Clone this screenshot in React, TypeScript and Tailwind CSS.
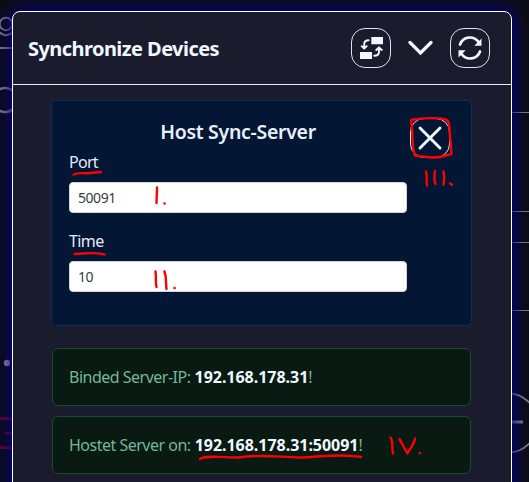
import type { ReactNode } from "react";

function Backdrop() {
  return (
    <svg className="absolute inset-0" width="529" height="482" fill="none">
      <rect width="529" height="482" fill="#0c0c15" />
      <g stroke="#7c7b88" strokeWidth="1.8">
        <circle cx="6" cy="24" r="6.3" />
        <path d="M-2 31 Q6 39 13 32M0 48H13" />
        <circle cx="5" cy="100" r="12" strokeWidth="2.6" />
        <path strokeWidth="1" d="M511 112.5H529M511 211.5H529M511 242.5H529M511 310.5H529" />
        <circle cx="508" cy="423" r="29.5" />
        <path strokeWidth="3" d="M511 422H523" />
      </g>
      <circle cx="7" cy="363" r="3.2" fill="#8d8aa2" />
      <path d="M0 418.5H13M5 433H13M0 447.5H13" stroke="#680037" strokeWidth="3" />
    </svg>
  );
}

function RoundButton({ children }: { children: ReactNode }) {
  return (
    <button className="flex size-10 shrink-0 items-center justify-center rounded-[14px] border border-[#dce4ee] text-[#f0f8ff]">
      {children}
    </button>
  );
}

function SwapIcon() {
  return (
    <svg width="24" height="24" viewBox="0 0 24 24" fill="none" stroke="currentColor" strokeWidth="1.9" strokeLinecap="round" strokeLinejoin="round">
      <path fill="currentColor" stroke="none" d="M12.3 1H24v7.3H12.3zM1 15.9h12V23H1z" />
      <path d="M9.6 4.3Q5.2 4.3 5.2 8.3v4.3M2.7 10.2 5.2 12.7l2.5-2.5M15.2 19.7Q20 19.7 20 15.7v-4.2M17.3 14 20 11.3l2.7 2.7" />
    </svg>
  );
}

function SyncIcon() {
  return (
    <svg width="26" height="26" viewBox="0 0 26 26" fill="none" stroke="currentColor" strokeWidth="2.7" strokeLinecap="round">
      <path d="M3 9.5C6 1.2 16.5.2 21.5 7M23 16.5C20 24.8 9.5 25.8 4.5 19" />
      <path fill="currentColor" stroke="none" d="M24.5 3.5v7.2h-7.2zM1.5 22.5v-7.2h7.2z" />
    </svg>
  );
}

function Field({ label, value, tracking }: { label: string; value: string; tracking: string }) {
  return (
    <label className="block">
      <span className={`block h-[30px] text-[16px] leading-[21px] text-[#e3ebf5] ${tracking}`}>{label}</span>
      <input
        defaultValue={value}
        className="block h-[31px] w-[338px] rounded-[4px] border border-[#ced4da] bg-white px-2 text-[14px] tracking-[-0.45px] text-[#353b42] outline-none"
      />
    </label>
  );
}

function Alert({ label, value }: { label: string; value: string }) {
  return (
    <div className="flex h-[58px] items-center whitespace-nowrap rounded-[6px] border border-[#1b4a31] bg-[#081a11] pl-4 text-[16px] text-[#75b798]">
      <span className="tracking-[-0.5px]">{label}</span>
      <strong className="ml-1 font-bold tracking-[-0.03px] text-[#f0f8ff]">{value}</strong>
      <span>!</span>
    </div>
  );
}

function Annotations() {
  return (
    <svg className="pointer-events-none absolute inset-0" width="529" height="482" fill="none" stroke="#ff0000" strokeWidth="2.4" strokeLinecap="round" strokeLinejoin="round">
      <path d="M73.5 174.5C80 172 83 173.8 90 173L101 172" />
      <path d="M157 187.5 156.5 203M164.5 203.5h.2" />
      <path d="M74.5 254C83 254 91 251.5 104.5 254.5" />
      <path d="M155.5 271.5C156.5 278 155 281 156.5 287M164.5 271.5C167 279 165.5 283 166.5 289M174.5 288h.2" />
      <path d="M411.5 124C409 117 416 120 418 119C425 117.5 443 118 446 119.5C451 121 449 135 450.5 141L451.5 154C449 155 446 155 444 156C435 159 425 157 415 155.5C412 150 413 136 411.5 124Z" />
      <path d="M426 171.5C427.5 177 426 181 427 185.5M435 171Q433.5 179 435.5 184M443.5 171.5Q445 178 443.5 184.5M450 183.5 452 184.8" />
      <path d="M200 459C206 455 223 457.5 239 457.5C258 454 278 457 300 457.5C318 457 340 453 361 457" />
      <path d="M390.5 437.5C393.5 441 391.5 447 393 453.5M399.5 439C402 443 405 450 407.5 453.5C410 448 414 445 415 438.5M419.7 453h.2" />
    </svg>
  );
}

export default function App() {
  return (
    <main className="relative h-[482px] w-[529px] overflow-hidden bg-[#0c0c15] font-['Noto_Sans','Segoe_UI',sans-serif]">
      <Backdrop />
      <section className="relative ml-3 mt-[11px] h-[490px] w-[500px] rounded-t-[8px] border border-white bg-[#1b1b2e] shadow-[0_0_15px_2px_#00008b]">
        <header className="flex h-[73px] items-center border-b border-[#e5edf4] pl-[15px] pr-[21px]">
          <h1 className="whitespace-nowrap pt-0.5 text-[20px] font-bold leading-7 tracking-[-0.56px] text-[#f0f8ff]">Synchronize Devices</h1>
          <div className="ml-auto flex items-center">
            <RoundButton><SwapIcon /></RoundButton>
            <svg className="mx-[17px]" width="25" height="16" viewBox="0 0 25 16" fill="none" stroke="#f0f8ff" strokeWidth="3.2" strokeLinecap="round">
              <path d="m2 2.5 10.5 10.5L23 2.5" />
            </svg>
            <RoundButton><SyncIcon /></RoundButton>
          </div>
        </header>
        <div className="flex flex-col px-[39px] pt-[15px]">
          <section className="-ml-px flex h-[226px] w-[421px] rounded-[5px] border border-[#14295a] bg-[#031633] pl-[17px]">
            <div className="w-[338px] pt-[17px]">
              <h2 className="h-[34px] whitespace-nowrap text-center text-[19.5px] font-semibold leading-[27px] tracking-[-0.3px] text-[#e8f0f9]">Host Sync-Server</h2>
              <div className="flex flex-col gap-[18px]">
                <Field label="Port" value="50091" tracking="tracking-[-0.7px]" />
                <Field label="Time" value="10" tracking="tracking-[-0.6px]" />
              </div>
            </div>
            <div className="ml-[3px] pt-[17px]">
              <RoundButton>
                <svg width="26" height="26" viewBox="0 0 26 26" fill="none" stroke="currentColor" strokeWidth="2.9" strokeLinecap="round">
                  <path d="m3 3 20 20M23 3 3 23" />
                </svg>
              </RoundButton>
            </div>
          </section>
          <div className="mt-[22px] flex w-[419px] flex-col gap-[10px]">
            <Alert label="Binded Server-IP:" value="192.168.178.31" />
            <Alert label="Hostet Server on:" value="192.168.178.31:50091" />
          </div>
        </div>
      </section>
      <Annotations />
    </main>
  );
}
